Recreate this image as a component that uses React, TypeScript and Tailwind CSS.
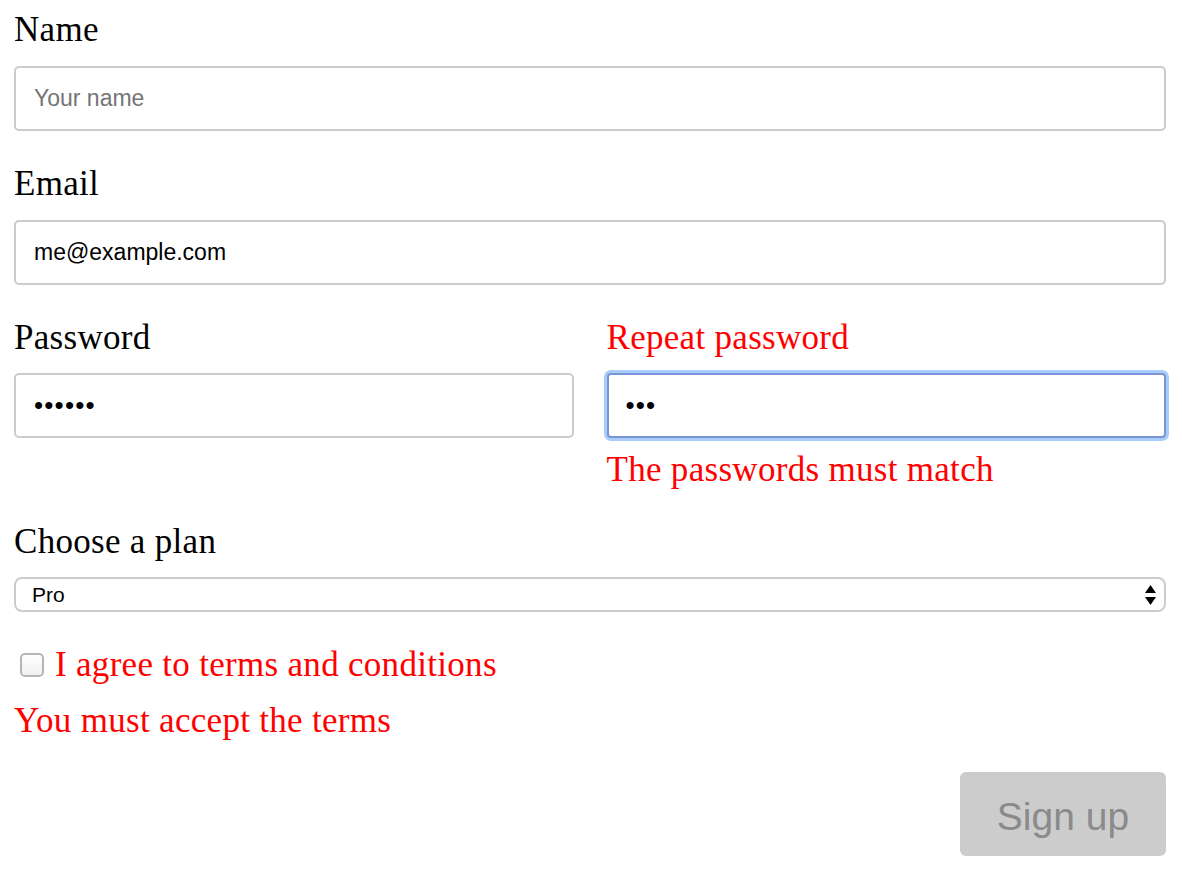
import React from "react";

const serif = "font-['Liberation_Serif',serif]";
const sans = "font-['Liberation_Sans',Arial,sans-serif]";

function Label({ children, red }: { children: React.ReactNode; red?: boolean }) {
  return (
    <div className={`${serif} text-[35px] tracking-[0.3px] leading-[40px] ${red ? "text-[#ff0000]" : "text-black"}`}>
      {children}
    </div>
  );
}

export default function App() {
  const inputBase =
    "block w-full h-[65px] rounded-[5px] border-2 border-[#cccccc] bg-white px-[18px] outline-none text-black";
  return (
    <div className="bg-white min-h-[888px] w-[1182px] pl-[14px] pr-[16px] pt-[10px]">
      <Label>Name</Label>
      <input
        className={`${inputBase} ${sans} text-[23px] mt-[16px] placeholder:text-[#757575]`}
        placeholder="Your name"
        readOnly
      />

      <div className="mt-[33px]">
        <Label>Email</Label>
      </div>
      <input
        className={`${inputBase} ${sans} text-[23px] mt-[16px]`}
        value="me@example.com"
        readOnly
      />

      <div className="mt-[33px] grid grid-cols-2 gap-x-[33px]">
        <div>
          <Label>Password</Label>
          <input
            className={`${inputBase} ${sans} text-[26px] tracking-[1.2px] mt-[15px]`}
            value="••••••"
            readOnly
          />
        </div>
        <div>
          <Label red>Repeat password</Label>
          <input
            className={`block w-full h-[65px] rounded-[4px] border-2 border-[#7a95d6] bg-white px-[17px] outline-none text-black shadow-[0_0_0_3px_#a8cdfb] ${sans} text-[26px] tracking-[1.2px] mt-[15px]`}
            value="•••"
            readOnly
          />
          <div className="mt-[12px]">
            <Label red>The passwords must match</Label>
          </div>
        </div>
      </div>

      <div className="mt-[32px]">
        <Label>Choose a plan</Label>
      </div>
      <div
        className={`mt-[15px] h-[35px] w-full rounded-[8px] border-2 border-[#cccccc] bg-white flex items-center justify-between pl-[16px] pr-[7px] ${sans} text-[21px] text-black`}
      >
        <span>Pro</span>
        <svg width="13" height="24" viewBox="0 0 13 24">
          <path d="M6.5 2 L12 10 L1 10 Z" fill="#000" />
          <path d="M6.5 22 L12 14 L1 14 Z" fill="#000" />
        </svg>
      </div>

      <div className="mt-[33px] flex items-center">
        <div className="ml-[6px] w-[24px] h-[24px] rounded-[5px] border-2 border-[#b5b5b5] bg-gradient-to-b from-white to-[#f0f0f0] shrink-0" />
        <div className="ml-[11px]">
          <Label red>I agree to terms and conditions</Label>
        </div>
      </div>

      <div className="mt-[16px]">
        <Label red>You must accept the terms</Label>
      </div>

      <div className="mt-[31px] flex justify-end">
        <button
          className={`w-[206px] h-[84px] rounded-[6px] bg-[#cccccc] text-[#8a8a8a] ${sans} text-[39px] pt-[6px]`}
          disabled
        >
          Sign up
        </button>
      </div>
    </div>
  );
}
